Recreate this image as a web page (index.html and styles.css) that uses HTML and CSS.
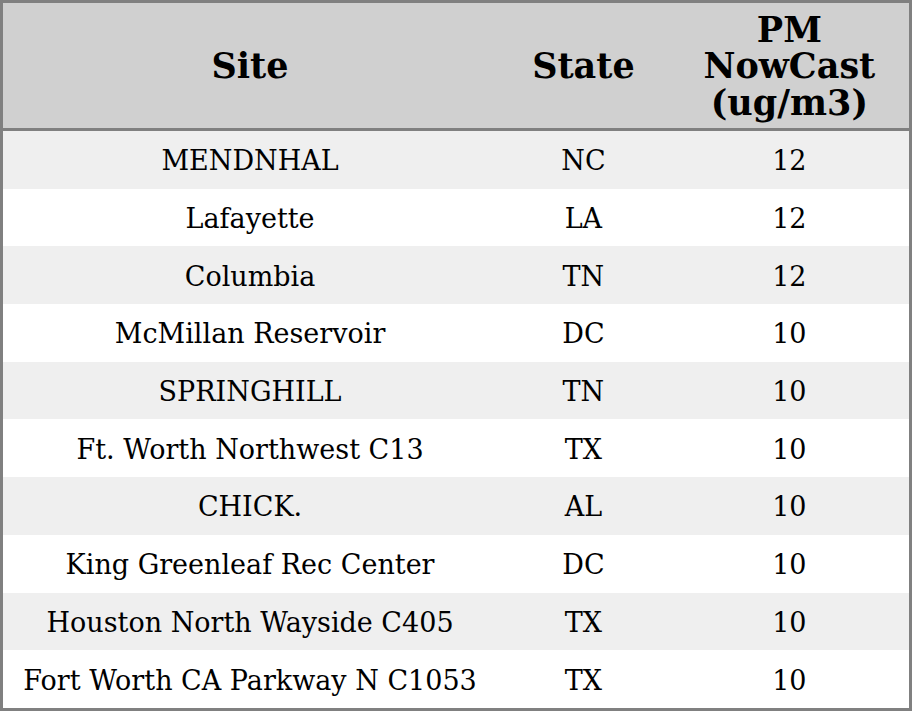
FILE: index.html
```html
<!DOCTYPE html>
<html>
<head>
<meta charset="utf-8">
<link rel="stylesheet" href="styles.css">
</head>
<body>
<table class="data">
  <colgroup>
    <col class="c-site">
    <col class="c-state">
    <col class="c-pm">
  </colgroup>
  <thead>
    <tr><th>Site</th><th>State</th><th>PM<br>NowCast<br>(ug/m3)</th></tr>
  </thead>
  <tbody>
    <tr><td>MENDNHAL</td><td>NC</td><td>12</td></tr>
    <tr><td>Lafayette</td><td>LA</td><td>12</td></tr>
    <tr><td>Columbia</td><td>TN</td><td>12</td></tr>
    <tr><td>McMillan Reservoir</td><td>DC</td><td>10</td></tr>
    <tr><td>SPRINGHILL</td><td>TN</td><td>10</td></tr>
    <tr><td>Ft. Worth Northwest C13</td><td>TX</td><td>10</td></tr>
    <tr><td>CHICK.</td><td>AL</td><td>10</td></tr>
    <tr><td>King Greenleaf Rec Center</td><td>DC</td><td>10</td></tr>
    <tr><td>Houston North Wayside C405</td><td>TX</td><td>10</td></tr>
    <tr><td>Fort Worth CA Parkway N C1053</td><td>TX</td><td>10</td></tr>
  </tbody>
</table>
</body>
</html>
```
FILE: styles.css
```css
html, body {
  margin: 0;
  padding: 0;
  background: #ffffff;
}
.data {
  width: 912px;
  border-collapse: collapse;
  table-layout: fixed;
  border: 3px solid #808080;
  font-family: "DejaVu Serif", serif;
  color: #000;
}
.c-site { width: 494px; }
.c-state { width: 172px; }
.c-pm { width: 240px; }
.data th {
  background: #d0d0d0;
  font-size: 35px;
  font-weight: bold;
  line-height: 36.5px;
  height: 123px;
  padding: 2px 0 0;
  text-align: center;
  border-bottom: 3px solid #808080;
}
.data td {
  font-size: 27px;
  height: 55.7px;
  padding: 2px 0 0;
  text-align: center;
}
.data tbody tr:nth-child(odd) td {
  background: #efefef;
}
```
